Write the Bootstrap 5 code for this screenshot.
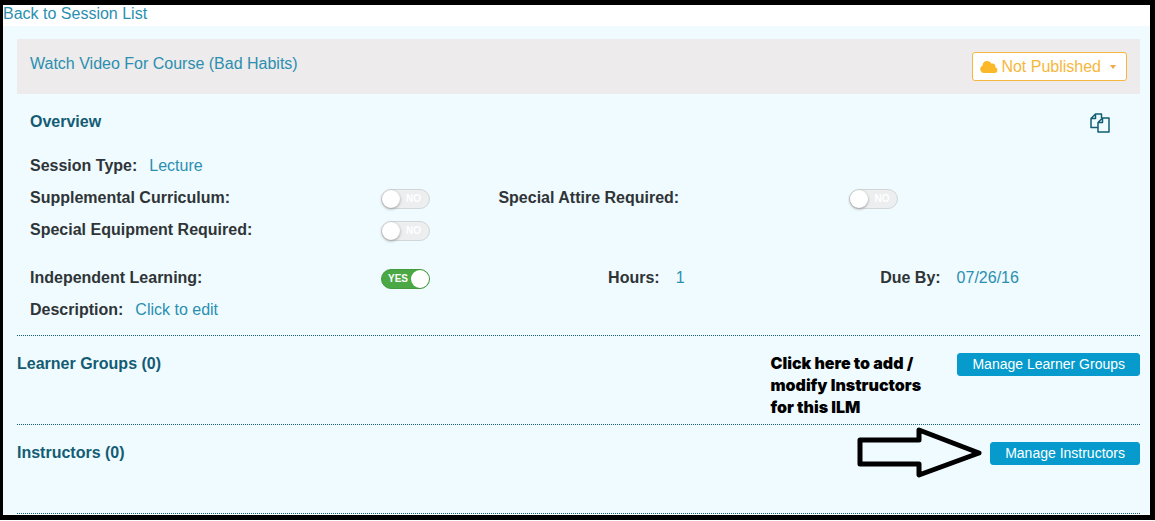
<!DOCTYPE html>
<html lang="en">
<head>
<meta charset="utf-8">
<meta name="viewport" content="width=device-width, initial-scale=1">
<title>Session</title>
<link href="https://cdn.jsdelivr.net/npm/bootstrap@5.3.0/dist/css/bootstrap.min.css" rel="stylesheet">
<style>
body { font-family: "Liberation Sans", Arial, sans-serif; font-size: 16px; line-height: 24px; color: #2f3437; background: #fff; }
a { color: #2a8fb0; text-decoration: none; }
a:hover { text-decoration: underline; }
h2 { font-size: 16px; line-height: 24px; font-weight: 700; color: #135c74; margin: 0; }
.page-frame { border: 5px solid #000; border-left-width: 3px; min-height: calc(100vh - 1px); }
.back-bar { line-height: 18px; padding-bottom: 3px; }
.session-panel { background: #effbff; padding: 13px 10px 0 14px; }
.session-head { background: #edebeb; padding: 13px; }
.publish-btn { --bs-btn-font-size: 16px; --bs-btn-line-height: 21px; --bs-btn-padding-x: 8px; --bs-btn-padding-y: 3px; --bs-btn-border-radius: 3px;
  --bs-btn-color: #f6b73c; --bs-btn-border-color: #f6b73c; --bs-btn-bg: #fff; --bs-btn-hover-color: #e5a326; --bs-btn-hover-border-color: #e5a326; padding-left: 7px; }
.publish-btn svg { margin-right: 3px; }
.publish-btn::after { border-width: 4px 3px 0; margin-left: 9px; margin-right: 2px; color: #f0a84a; }
.overview { padding: 16px 13px 13px; border-bottom: 1px dotted #135c74; }
.copy-btn { width: 20px; height: 20px; margin: 3px 17px 0 0; color: #135c74; }
.fields { margin-top: 20px; row-gap: 8px; }
.fields label, .field-name { font-weight: 700; }
.field-row { display: grid; align-items: end; grid-template-columns: 32% 10.7% 32% 1fr; }
.ilm-row { grid-template-columns: 32% 20.7% 24.8% 1fr; margin-top: 16px; }
.switch-box { position: relative; display: block; width: 49px; height: 20px; margin-bottom: 1px; }
.switch-box input { appearance: none; display: block; width: 49px; height: 20px; margin: 0; border-radius: 10px; background: #eceeef; border: 1px solid #d3d6d7; }
.switch-box input::before { content: ""; display: block; width: 18px; height: 18px; border-radius: 9px; background: #fff; box-shadow: 0 1px 3px #999; }
.switch-box input:checked { background: #4aa944; border-color: #45993f; }
.switch-box input:checked::before { margin-left: 29px; box-shadow: none; }
.switch-text { position: absolute; top: 0; right: 9px; font-size: 10px; line-height: 20px; font-weight: 700; color: #fff; pointer-events: none; }
input:checked + .switch-text { right: auto; left: 7px; }
.manage-section { padding-top: 16px; min-height: 89px; border-bottom: 1px dotted #135c74; }
.manage-btn { --bs-btn-font-size: 14px; --bs-btn-line-height: 21px; --bs-btn-padding-x: 14px; --bs-btn-padding-y: 0; --bs-btn-border-radius: 3px;
  --bs-btn-color: #fff; --bs-btn-bg: #069bcc; --bs-btn-border-color: #069bcc; --bs-btn-hover-color: #fff; --bs-btn-hover-bg: #0587b2; margin-top: 1px; }
.hint { width: 187px; font-family: Inter, "Arial Black", sans-serif; font-size: 16px; line-height: 22px; font-weight: 900; color: #000; }
.hint-arrow { width: 126px; height: 52px; margin: -15px 7px 0 0; }
</style>
</head>
<body>
<div class="page-frame">
  <nav class="back-bar"><a href="#">Back to Session List</a></nav>
  <main class="session-panel">
    <header class="session-head d-flex justify-content-between align-items-start">
      <a href="#">Watch Video For Course (Bad Habits)</a>
      <button type="button" class="btn publish-btn dropdown-toggle d-flex align-items-center" data-bs-toggle="dropdown">
        <svg width="18" height="14" viewBox="0 0 18 14" aria-hidden="true"><path fill="#fbb829" d="M4 13a4 4 0 0 1-1.500-7.600A4.800 4.800 0 0 1 11.600 3.700a2.800 2.800 0 0 1 3.600 3.600A2.900 2.900 0 0 1 15 13z"/></svg>
        Not Published
      </button>
    </header>

    <section class="overview">
      <div class="d-flex justify-content-between">
        <h2>Overview</h2>
        <button type="button" class="btn p-0 border-0 copy-btn d-flex" aria-label="Copy session">
          <svg width="20" height="20" viewBox="0 0 20 20" fill="none" stroke="currentColor" stroke-width="1.500" stroke-linejoin="round"><path d="M7.500 14.500H1V5.500L5.500 1H11.500V5M5.500 1V5.500H1M12.500 5H19V19H8V9.500ZM12.500 5V9.500H8"/></svg>
        </button>
      </div>
      <div class="fields d-flex flex-column">
        <div><span class="field-name">Session Type:</span><a href="#" class="ms-2 ps-1">Lecture</a></div>
        <div class="field-row">
          <label for="supp">Supplemental Curriculum:</label>
          <span class="switch-box"><input type="checkbox" role="switch" id="supp"><span class="switch-text">NO</span></span>
          <label for="attire">Special Attire Required:</label>
          <span class="switch-box"><input type="checkbox" role="switch" id="attire"><span class="switch-text">NO</span></span>
        </div>
        <div class="field-row">
          <label for="equip">Special Equipment Required:</label>
          <span class="switch-box"><input type="checkbox" role="switch" id="equip"><span class="switch-text">NO</span></span>
        </div>
        <div class="field-row ilm-row">
          <label for="ilm">Independent Learning:</label>
          <span class="switch-box"><input type="checkbox" role="switch" id="ilm" checked><span class="switch-text">YES</span></span>
          <div><span class="field-name">Hours:</span><a href="#" class="ms-3">1</a></div>
          <div><span class="field-name">Due By:</span><a href="#" class="ms-3">07/26/16</a></div>
        </div>
        <div><span class="field-name">Description:</span><a href="#" class="ms-2 ps-1">Click to edit</a></div>
      </div>
    </section>

    <section class="manage-section d-flex align-items-start">
      <h2 class="me-auto">Learner Groups (0)</h2>
      <p class="hint mb-0">Click here to add /<br>modify Instructors<br>for this ILM</p>
      <button type="button" class="btn manage-btn">Manage Learner Groups</button>
    </section>

    <section class="manage-section d-flex align-items-start">
      <h2 class="me-auto">Instructors (0)</h2>
      <svg class="hint-arrow" viewBox="0 0 126 52" aria-hidden="true"><path d="M3 14H62V4L122 27L62 49V38H3Z" fill="none" stroke="#000" stroke-width="5" stroke-linejoin="round"/></svg>
      <button type="button" class="btn manage-btn">Manage Instructors</button>
    </section>
  </main>
</div>
<script src="https://cdn.jsdelivr.net/npm/bootstrap@5.3.0/dist/js/bootstrap.bundle.min.js"></script>
</body>
</html>
